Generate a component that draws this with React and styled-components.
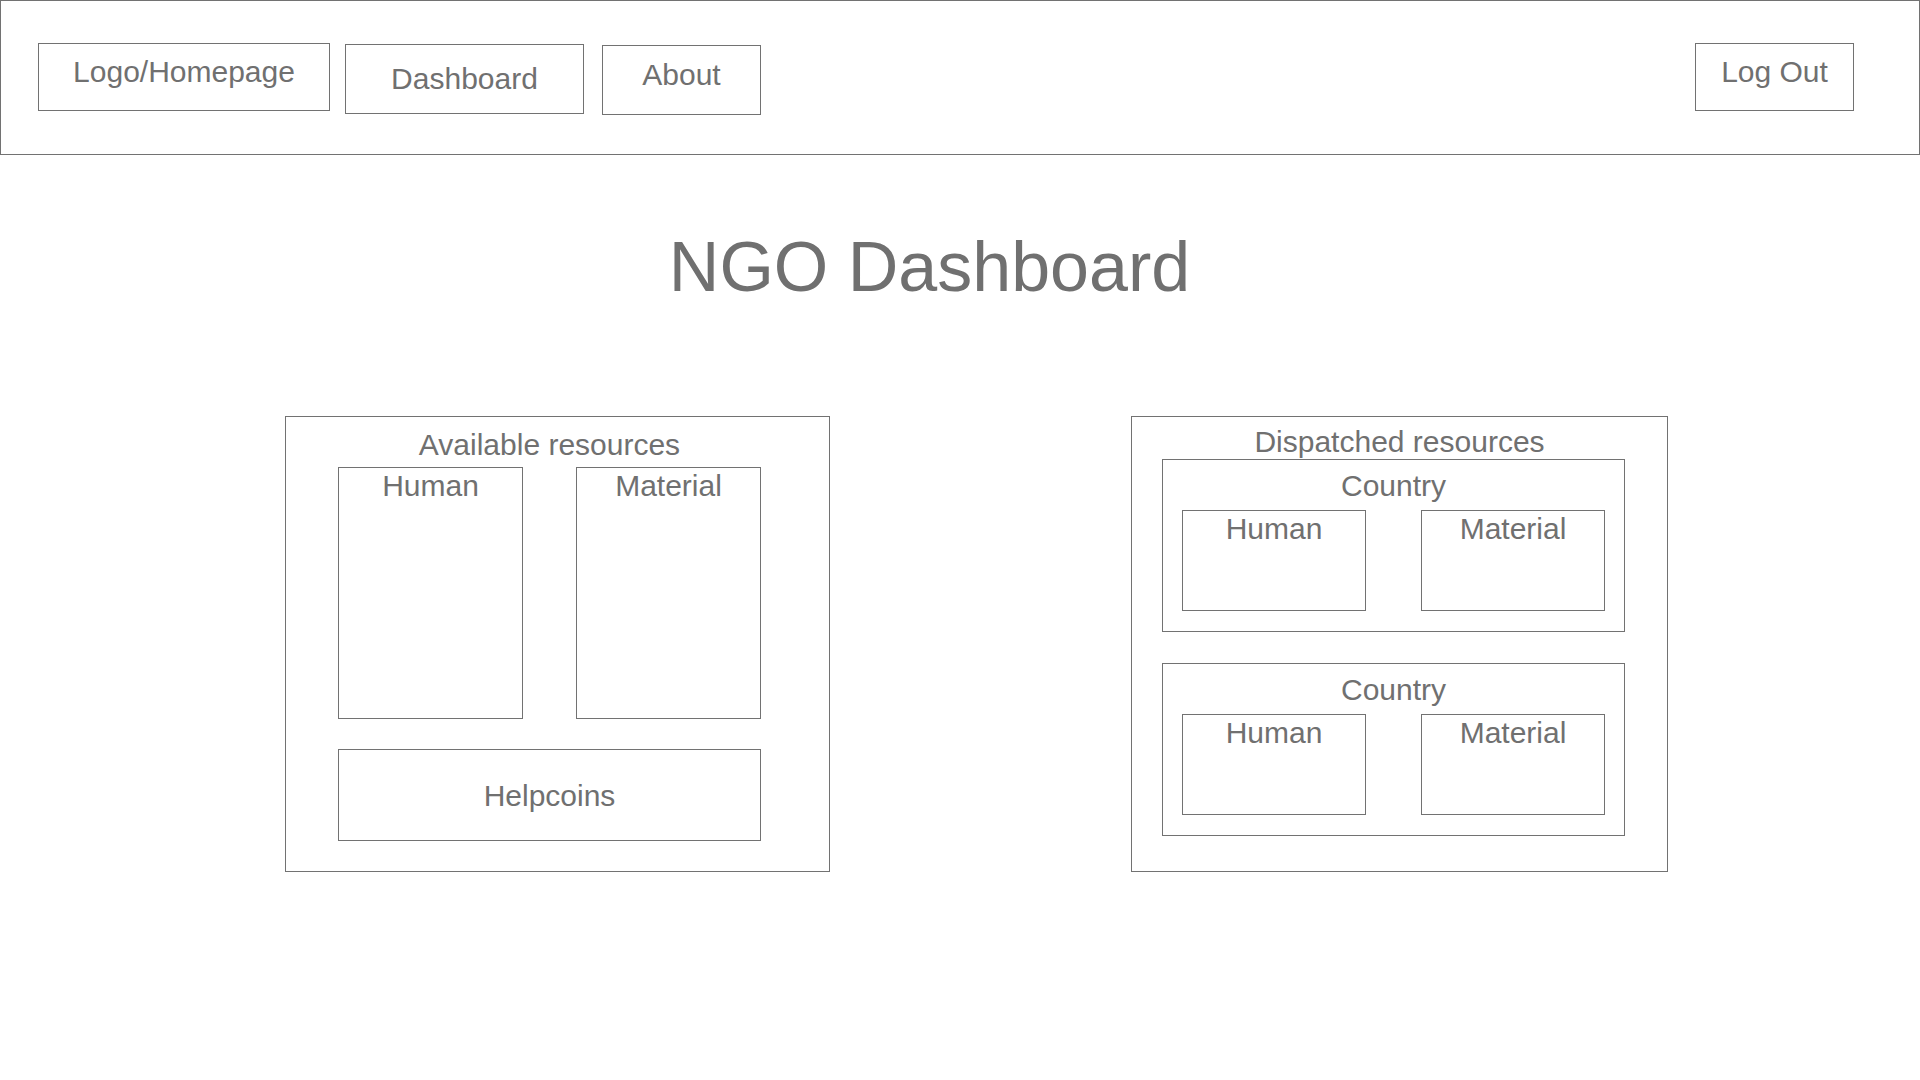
import React from "react";
import styled, { createGlobalStyle } from "styled-components";

const GlobalStyle = createGlobalStyle`
  *,
  *:before,
  *:after {
    box-sizing: border-box;
  }
  body {
    margin: 0;
    background: #ffffff;
    font-family: "Liberation Sans", Arial, sans-serif;
    color: #707070;
  }
`;

const line = "#727272";

const Header = styled.header`
  height: 155px;
  border: 1px solid ${line};
  display: flex;
  align-items: flex-start;
  padding: 42px 65px 0 37px;
`;

const NavButton = styled.div`
  width: ${(p) => p.$w}px;
  height: ${(p) => p.$h || 68}px;
  margin-top: ${(p) => p.$top || 0}px;
  margin-right: ${(p) => p.$gap || 0}px;
  border: 1px solid ${line};
  display: flex;
  align-items: center;
  justify-content: center;
  padding-bottom: ${(p) => p.$lift || 0}px;
  font-size: 30px;
  line-height: 34px;
  white-space: nowrap;
`;

const Spacer = styled.div`
  flex: 1;
`;

const Title = styled.h1`
  margin: 70px 0 0;
  padding-right: 61px;
  text-align: center;
  font-size: 70px;
  line-height: 84px;
  font-weight: 400;
`;

const Panels = styled.main`
  display: flex;
  align-items: flex-start;
  gap: 301px;
  margin-top: 107px;
  padding-left: 285px;
`;

const Panel = styled.section`
  width: ${(p) => p.$w}px;
  height: 456px;
  border: 1px solid ${line};
  padding-top: ${(p) => p.$top}px;
`;

const Heading = styled.div`
  font-size: 30px;
  line-height: 34px;
  text-align: center;
  margin-bottom: ${(p) => p.$mb || 0}px;
`;

const Body = styled.div`
  padding-left: ${(p) => p.$inset}px;
  width: ${(p) => p.$inset + p.$w}px;
`;

const Pair = styled.div`
  display: grid;
  grid-template-columns: ${(p) => p.$col}px ${(p) => p.$col}px;
  column-gap: ${(p) => p.$gap}px;
`;

const Bin = styled.div`
  height: ${(p) => p.$h}px;
  border: 1px solid ${line};
  font-size: 30px;
  line-height: 34px;
  text-align: center;
  padding-top: 1px;
`;

const CoinBox = styled.div`
  height: 92px;
  margin-top: 30px;
  border: 1px solid ${line};
  display: flex;
  align-items: center;
  justify-content: center;
  font-size: 30px;
  line-height: 34px;
  padding-top: 2px;
`;

const CountryBox = styled.div`
  border: 1px solid ${line};
  padding: 9px 19px 20px;
  margin-top: ${(p) => p.$mt || 0}px;
`;

const Country = ({ mt }) => (
  <CountryBox $mt={mt}>
    <Heading $mb={7}>Country</Heading>
    <Pair $col={184} $gap={55}>
      <Bin $h={101}>Human</Bin>
      <Bin $h={101}>Material</Bin>
    </Pair>
  </CountryBox>
);

const App = () => {
  return (
    <>
      <GlobalStyle />
      <Header>
        <NavButton $w={292} $gap={15} $lift={11}>
          Logo/Homepage
        </NavButton>
        <NavButton $w={239} $h={70} $top={1} $gap={18}>
          Dashboard
        </NavButton>
        <NavButton $w={159} $h={70} $top={2} $lift={10}>
          About
        </NavButton>
        <Spacer />
        <NavButton $w={159} $lift={11}>
          Log Out
        </NavButton>
      </Header>

      <Title>NGO Dashboard</Title>

      <Panels>
        <Panel $w={545} $top={11}>
          <Body $inset={52} $w={423}>
            <Heading $mb={5}>Available resources</Heading>
            <Pair $col={185} $gap={53}>
              <Bin $h={252}>Human</Bin>
              <Bin $h={252}>Material</Bin>
            </Pair>
            <CoinBox>Helpcoins</CoinBox>
          </Body>
        </Panel>

        <Panel $w={537} $top={8}>
          <Heading>Dispatched resources</Heading>
          <Body $inset={30} $w={463}>
            <Country />
            <Country mt={31} />
          </Body>
        </Panel>
      </Panels>
    </>
  );
};

export default App;
